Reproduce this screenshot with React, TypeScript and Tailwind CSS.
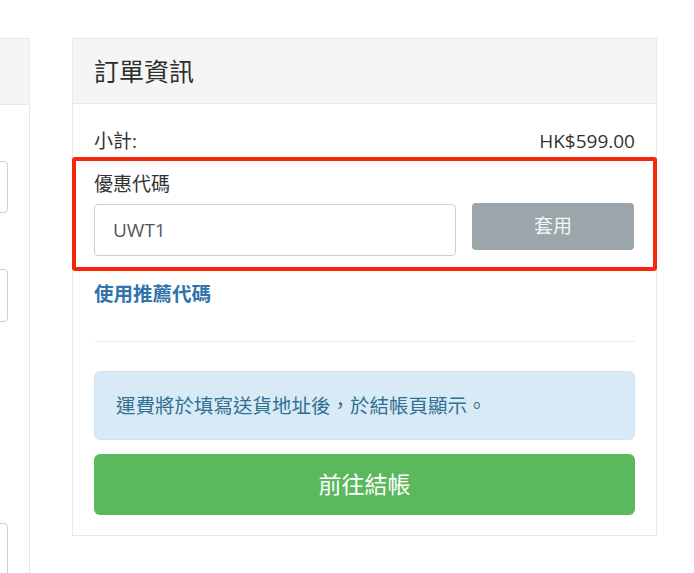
import React from "react";

const font = {
  fontFamily: '"Open Sans", "Noto Sans CJK TC", sans-serif',
};

export default function App() {
  return (
    <div
      className="relative w-[694px] h-[573px] overflow-hidden bg-white text-[#333]"
      style={font}
    >
      <div className="flex items-start">
        {/* Left partial card */}
        <div className="mt-[38px] w-[30px] h-[535px] shrink-0 overflow-hidden border-r border-t border-[#e8e8e8]">
          <div className="h-[66px] bg-[#f5f5f5] border-b border-[#e8e8e8]" />
          <div className="flex flex-col">
            <div className="mt-[56px] ml-[-100px] w-[108px] h-[52px] rounded-[4px] border border-[#cfcfcf]" />
            <div className="mt-[56px] ml-[-100px] w-[108px] h-[53px] rounded-[4px] border border-[#cfcfcf]" />
            <div className="mt-[201px] ml-[-100px] w-[108px] h-[60px] rounded-[4px] border border-[#cfcfcf]" />
          </div>
        </div>

        {/* Right order card */}
        <div className="ml-[42px] mt-[38px] w-[585px] shrink-0 border border-[#e8e8e8]">
          <div className="h-[65px] bg-[#f5f5f5] border-b border-[#e8e8e8] px-[21px] flex items-center">
            <h2 className="text-[25px] leading-none font-normal text-[#2e2e2e]">訂單資訊</h2>
          </div>
          <div className="px-[21px] pt-[24px] pb-[20px]">
            <div className="flex justify-between items-center h-[27px] text-[19px]">
              <span>小計:</span>
              <span>HK$599.00</span>
            </div>
            <div className="mt-[16px] h-[27px] flex items-center text-[19px]">優惠代碼</div>
            <div className="mt-[6px] flex items-start gap-[16px]">
              <div className="w-[362px] h-[52px] rounded-[4px] border border-[#cfcfcf] flex items-center pl-[18px] text-[19px] text-[#555]">
                UWT1
              </div>
              <button className="w-[162px] h-[47px] mt-[-1px] rounded-[4px] bg-[#9ba5aa] text-[#f4f6f7] text-[19px] flex items-center justify-center">
                套用
              </button>
            </div>
            <div className="mt-[24px] h-[27px] flex items-center text-[19.5px] font-semibold text-[#3173ab]">
              使用推薦代碼
            </div>
            <div className="mt-[34px] h-px bg-[#ececec]" />
            <div className="mt-[29px] h-[69px] rounded-[6px] bg-[#d9eaf7] border border-[#cfe3f3] flex items-center px-[21px] text-[19.5px] text-[#31708f]">
              運費將於填寫送貨地址後，於結帳頁顯示。
            </div>
            <button className="mt-[14px] w-full h-[61px] rounded-[6px] bg-[#5cb85c] text-white text-[23px] flex items-center justify-center">
              前往結帳
            </button>
          </div>
        </div>
      </div>

      {/* Red highlight annotation */}
      <div className="absolute left-[72px] top-[157px] w-[585px] h-[114px] border-[4px] border-[#f7260c] rounded-[3px]" />
    </div>
  );
}
